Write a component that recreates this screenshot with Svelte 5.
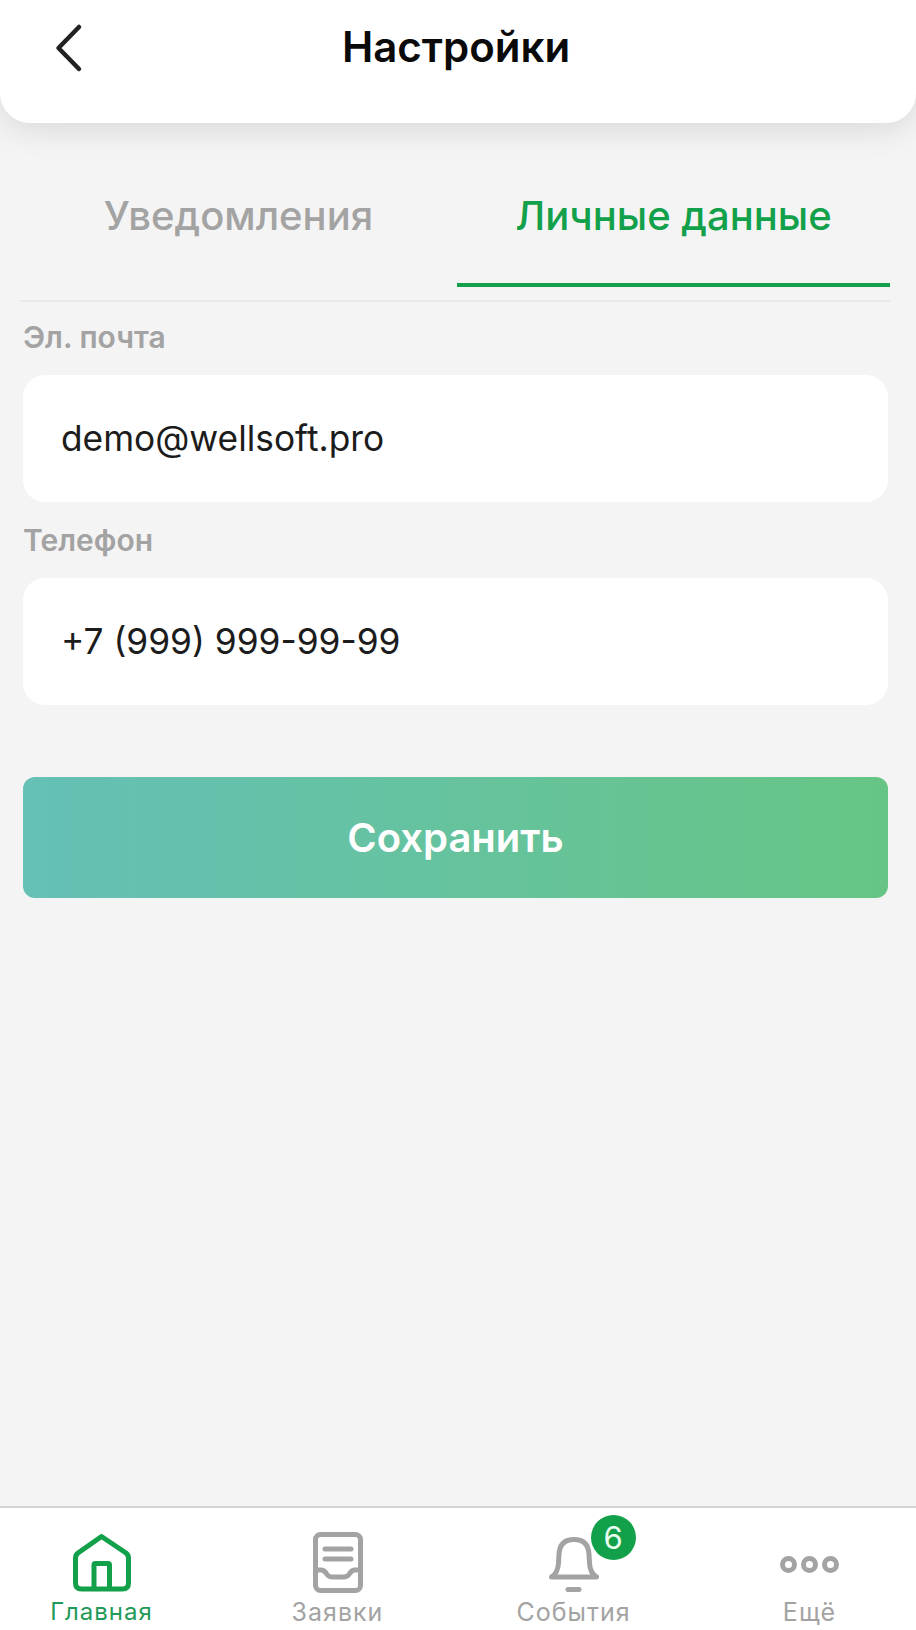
<script lang="ts">
    const navItems = [
        { id: "home", label: "Главная", active: true },
        { id: "orders", label: "Заявки" },
        { id: "events", label: "События", badge: 6 },
        { id: "more", label: "Ещё" },
    ];
</script>

<div class="screen">
    <header class="topbar">
        <svg class="back" width="30" height="50" viewBox="0 0 30 50" fill="none">
            <path d="M25 4 L4.500 25 L25 46" stroke="#222" stroke-width="4.500" stroke-linecap="round" stroke-linejoin="round" />
        </svg>
        <h1>Настройки</h1>
    </header>

    <main class="content">
        <div class="tabs">
            <div class="tab">Уведомления</div>
            <div class="tab active">Личные данные</div>
        </div>

        <div class="field">
            <span class="label">Эл. почта</span>
            <div class="input">demo@wellsoft.pro</div>
        </div>
        <div class="field second">
            <span class="label">Телефон</span>
            <div class="input">+7 (999) 999-99-99</div>
        </div>

        <button class="save">Сохранить</button>
    </main>

    <nav class="bottom">
        {#each navItems as item}
            <div class="nav-item" class:active={item.active}>
                <div class="icon">
                    <div class="glyph" class:low={item.id === "events" || item.id === "more"}>
                        {#if item.id === "home"}
                            <svg width="58" height="58" viewBox="0 0 58 58" fill="none" stroke="#12a14a" stroke-width="5" stroke-linejoin="round">
                                <path d="M28.500 2.500 L53 19 Q55.500 21 55.500 24 V49 Q55.500 55 49.500 55 H8.500 Q2.500 55 2.500 49 V24 Q2.500 21 5 19 Z" />
                                <path d="M21 55 V31 Q21 29.500 22.500 29.500 H35 Q36.500 29.500 36.500 31 V55" />
                            </svg>
                        {:else if item.id === "orders"}
                            <svg width="50" height="61" viewBox="0 0 50 61" fill="none" stroke="#a3a3a3" stroke-width="5" stroke-linecap="round" stroke-linejoin="round">
                                <rect x="2.500" y="2.500" width="45" height="56" rx="5" />
                                <path d="M12 17 H38 M12 27 H38" />
                                <path d="M2.500 38 H8 Q11 38 13 41 Q15 45 19 45 H31 Q35 45 37 41 Q39 38 42 38 H47.500" />
                            </svg>
                        {:else if item.id === "events"}
                            <svg width="50" height="55" viewBox="0 0 50 55" fill="none" stroke="#a3a3a3" stroke-width="5" stroke-linecap="round" stroke-linejoin="round">
                                <path d="M2.500 40 Q9 36 9.500 26 L10 17 Q11 2.500 25 2.500 Q39 2.500 40 17 L40.500 26 Q41 36 47.500 40 Z" />
                                <path d="M19 52.500 H30" />
                            </svg>
                        {:else}
                            <svg width="59" height="17" viewBox="0 0 59 17" fill="none" stroke="#a3a3a3" stroke-width="5">
                                <circle cx="8.500" cy="8.500" r="6" />
                                <circle cx="29.500" cy="8.500" r="6" />
                                <circle cx="50.500" cy="8.500" r="6" />
                            </svg>
                        {/if}
                        {#if item.badge}
                            <span class="badge">{item.badge}</span>
                        {/if}
                    </div>
                </div>
                <span class="nav-label">{item.label}</span>
            </div>
        {/each}
    </nav>
</div>

<style>
    :global(body) {
        margin: 0;
        background: #f4f4f5;
    }
    .screen {
        width: 916px;
        height: 1630px;
        display: flex;
        flex-direction: column;
        background: #f4f4f5;
        font-family: Inter, "Noto Sans", sans-serif;
        overflow: hidden;
    }
    .topbar {
        height: 123px;
        flex: none;
        display: flex;
        justify-content: center;
        position: relative;
        background: #fff;
        border-radius: 0 0 30px 30px;
        box-shadow: 0 8px 30px rgba(0, 0, 0, 0.1);
        padding-right: 4px;
        box-sizing: border-box;
    }
    .back {
        position: absolute;
        left: 54px;
        top: 23px;
    }
    h1 {
        margin: 22px 0 0;
        font-size: 42px;
        line-height: 50px;
        font-weight: 600;
        color: #0a0a0a;
    }
    .content {
        flex: 1;
        padding: 0 28px 0 23px;
    }
    .tabs {
        display: flex;
        margin: 0 -2px 0 -3px;
        padding-top: 59px;
        height: 118px;
        border-bottom: 2px solid #e9e9e9;
    }
    .tab {
        flex: 437 1 0;
        font-size: 40px;
        font-weight: 500;
        line-height: 67px;
        text-align: center;
        color: #a3a3a3;
    }
    .tab.active {
        flex: 433 1 0;
        color: #12a14a;
        border-bottom: 4px solid #12a14a;
        height: 101px;
    }
    .field {
        margin-top: 18px;
    }
    .field.second {
        margin-top: 21px;
    }
    .label {
        display: block;
        font-size: 30px;
        line-height: 34px;
        font-weight: 600;
        color: #a3a3a3;
        margin-bottom: 21px;
    }
    .input {
        height: 127px;
        padding-left: 38px;
        display: flex;
        align-items: center;
        background: #fff;
        border-radius: 22px;
        font-size: 35.300px;
        color: #1c1c1c;
    }
    .save {
        display: block;
        width: 100%;
        height: 121px;
        margin-top: 72px;
        border: none;
        border-radius: 12px;
        background: linear-gradient(90deg, #65c0b6, #66c585);
        color: #fff;
        font-family: inherit;
        font-size: 40px;
        font-weight: 600;
    }
    .bottom {
        height: 122px;
        flex: none;
        display: grid;
        grid-template-columns: repeat(4, 236px);
        justify-content: center;
        padding-right: 5px;
        background: #fff;
        border-top: 2px solid #d4d4d4;
    }
    .nav-item {
        display: flex;
        flex-direction: column;
        align-items: center;
    }
    .icon {
        height: 65px;
        padding-top: 22px;
        margin-bottom: 2px;
        display: flex;
        align-items: center;
        justify-content: center;
    }
    .glyph {
        display: flex;
        position: relative;
    }
    .glyph.low {
        margin-top: 4px;
    }
    .badge {
        position: absolute;
        right: -37px;
        top: -22px;
        width: 45px;
        height: 45px;
        border-radius: 50%;
        display: flex;
        align-items: center;
        justify-content: center;
        background: #12a14a;
        color: #eafff0;
        font-size: 31px;
    }
    .nav-label {
        font-size: 25px;
        line-height: 30px;
        letter-spacing: 1px;
        color: #a3a3a3;
    }
    .active .nav-label {
        font-size: 24px;
        color: #1f9a58;
    }
</style>
